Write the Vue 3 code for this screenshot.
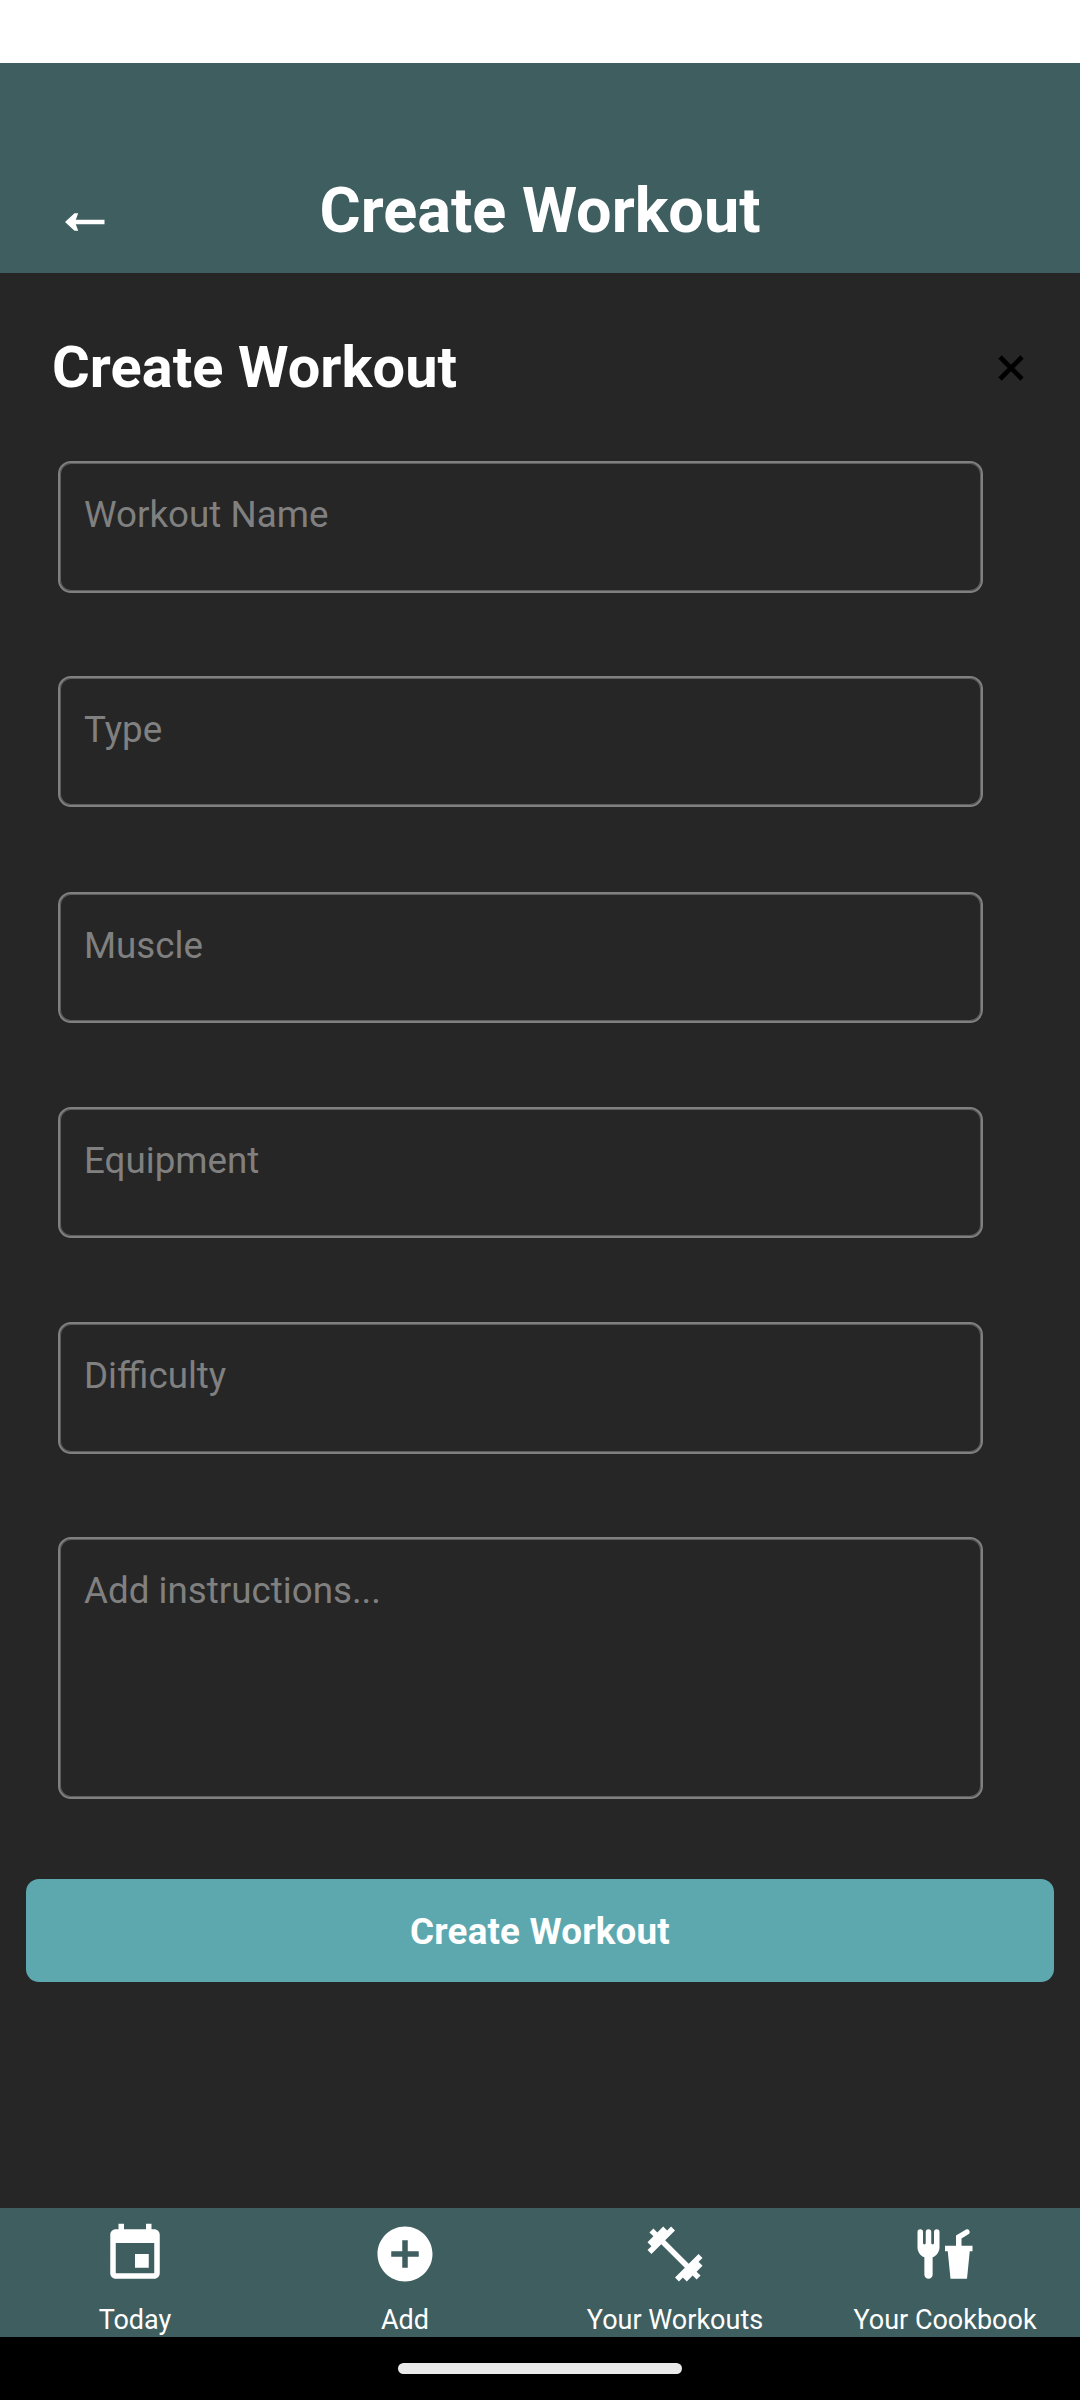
<script setup>
const fields = ['Workout Name', 'Type', 'Muscle', 'Equipment', 'Difficulty']

const tabs = [
  {
    label: 'Today',
    icon: 'M17 12h-5v5h5v-5zM16 1v2H8V1H6v2H5c-1.11 0-1.99.9-1.99 2L3 19c0 1.1.89 2 2 2h14c1.1 0 2-.9 2-2V5c0-1.1-.9-2-2-2h-1V1h-2zm3 18H5V8h14v11z',
  },
  {
    label: 'Add',
    icon: 'M12 2C6.48 2 2 6.48 2 12s4.48 10 10 10 10-4.48 10-10S17.52 2 12 2zm5 11h-4v4h-2v-4H7v-2h4V7h2v4h4v2z',
  },
  {
    label: 'Your Workouts',
    icon: 'M20.57 14.86L22 13.43 20.57 12 17 15.57 8.43 7 12 3.43 10.57 2 9.14 3.43 7.71 2 5.57 4.14 4.14 2.71 2.71 4.14l1.43 1.43L2 7.71l1.43 1.43L2 10.57 3.43 12 7 8.43 15.57 17 12 20.57 13.43 22l1.43-1.43L16.29 22l2.14-2.14 1.43 1.43 1.43-1.43-1.43-1.43L22 16.29z',
  },
  {
    label: 'Your Cookbook',
    icon: 'M3 3A1 1 0 0 0 2 4V9.5C2 11.19 3.03 12.63 4.5 13.22V19.5A1.5 1.5 0 0 0 6 21A1.5 1.5 0 0 0 7.5 19.5V13.22C8.97 12.63 10 11.19 10 9.5V4A1 1 0 0 0 9 3A1 1 0 0 0 8 4V8A.5 .5 0 0 1 7.5 8.5A.5 .5 0 0 1 7 8V4A1 1 0 0 0 6 3A1 1 0 0 0 5 4V8A.5 .5 0 0 1 4.5 8.5A.5 .5 0 0 1 4 8V4A1 1 0 0 0 3 3M19.88 3C19.75 3 19.62 3.09 19.5 3.16L16 5.25V9H12V11H13L14 21H20L21 11H22V9H18V6.34L20.5 4.84C21 4.56 21.13 4 20.84 3.5C20.63 3.14 20.26 2.95 19.88 3Z',
  },
]
</script>

<template>
  <div class="screen">
    <div class="status-bar"></div>

    <header class="header">
      <button class="back" aria-label="Back">
        <svg width="40" height="18" viewBox="0 0 40 18">
          <path d="M0 9L9.5 0.2H13.2L10.8 6.7H39.5V11.3H10.8L13.2 17.8H9.5Z" fill="#fff" />
        </svg>
      </button>
      <h1 class="header-title">Create Workout</h1>
      <div class="header-spacer"></div>
    </header>

    <main class="content">
      <div class="title-row">
        <h2 class="title">Create Workout</h2>
        <button class="close" aria-label="Close">
          <svg width="26" height="26" viewBox="0 0 26 26">
            <path d="M2 2L24 24M24 2L2 24" stroke="#000" stroke-width="4.6" />
          </svg>
        </button>
      </div>

      <form class="form" @submit.prevent>
        <div v-for="field in fields" :key="field" class="field">{{ field }}</div>
        <div class="field field-tall">Add instructions...</div>
      </form>

      <button class="submit">Create Workout</button>
    </main>

    <nav class="tabs">
      <div v-for="tab in tabs" :key="tab.label" class="tab">
        <svg class="tab-icon" viewBox="0 0 24 24"><path :d="tab.icon" fill="#fff" /></svg>
        <span class="tab-label">{{ tab.label }}</span>
      </div>
    </nav>

    <div class="system-bar"><div class="handle"></div></div>
  </div>
</template>

<style>
body {
  margin: 0;
  background: #262626;
}
</style>

<style scoped>
.screen {
  width: 1080px;
  height: 2400px;
  display: flex;
  flex-direction: column;
  background: #262626;
  color: #fff;
  font-family: Roboto, 'Liberation Sans', sans-serif;
  overflow: hidden;
}

button {
  border: 0;
  padding: 0;
  background: none;
  color: inherit;
  font: inherit;
}

.status-bar {
  height: 63px;
  flex: none;
  background: #fff;
}

.header {
  box-sizing: border-box;
  height: 210px;
  flex: none;
  padding: 0 65px 25px;
  display: flex;
  align-items: flex-end;
  justify-content: space-between;
  background: #3f5e60;
}

.back {
  display: flex;
  width: 40px;
  padding-bottom: 17.5px;
}

.header-spacer {
  width: 40px;
}

.header-title {
  margin: 0;
  font-size: 63px;
  line-height: 74px;
  font-weight: 700;
  white-space: nowrap;
}

.content {
  flex: 1;
  display: flex;
  flex-direction: column;
}

.title-row {
  height: 188px;
  box-sizing: border-box;
  padding: 60px 56px 0 52px;
  display: flex;
  justify-content: space-between;
  align-items: flex-start;
}

.title {
  margin: 0;
  font-size: 57.75px;
  line-height: 68px;
  font-weight: 700;
  letter-spacing: 0.06px;
  white-space: nowrap;
}

.close {
  display: flex;
  margin-top: 22px;
}

.form {
  display: grid;
  grid-template-rows: 215px 216px 215px 215px 215px 262px;
  padding: 0 97.5px 0 58px;
}

.field {
  box-sizing: border-box;
  height: 131px;
  padding: 30px 24px 0;
  border: 2px solid #808080;
  border-radius: 13px;
  box-shadow: inset 0 0 0 1px rgba(128, 128, 128, 0.6);
  color: #808080;
  font-size: 36.75px;
  line-height: 43px;
}

.field:nth-child(4n + 1) {
  height: 132px;
}

.field-tall {
  height: 262px;
}

.submit {
  height: 103px;
  margin: 80px 26px 0;
  padding-top: 2px;
  border-radius: 13px;
  background: #5da8af;
  font-size: 36.75px;
  line-height: 43px;
  font-weight: 700;
  letter-spacing: 0.18px;
}

.tabs {
  height: 129px;
  flex: none;
  display: flex;
  background: #3f5e60;
}

.tab {
  flex: 1;
  padding-top: 13px;
  display: flex;
  flex-direction: column;
  align-items: center;
}

.tab-icon {
  width: 66px;
  height: 66px;
}

.tab-label {
  margin-top: 17px;
  font-size: 27px;
  line-height: 32px;
  white-space: nowrap;
}

.system-bar {
  height: 63px;
  flex: none;
  display: flex;
  align-items: center;
  justify-content: center;
  background: #000;
}

.handle {
  width: 284px;
  height: 11px;
  border-radius: 5.5px;
  background: #eaeaea;
}
</style>
